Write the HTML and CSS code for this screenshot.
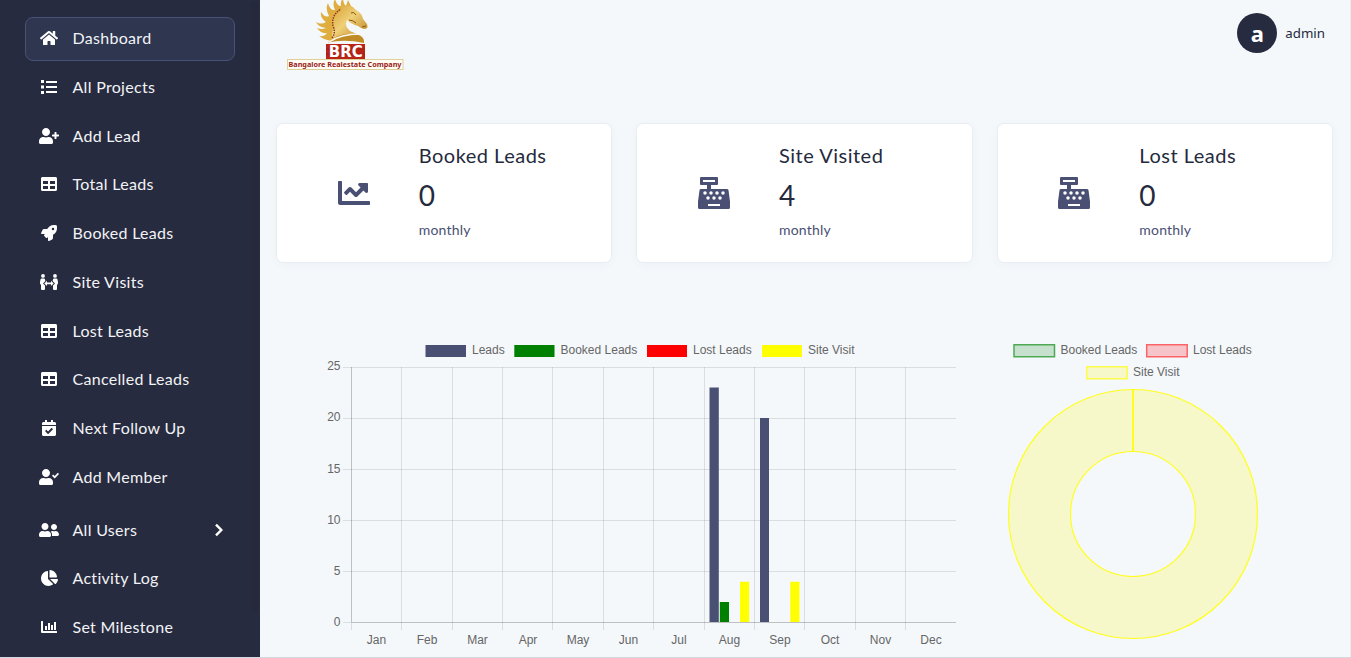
FILE: index.html
```html
<!DOCTYPE html>
<html lang="en">
<head>
<meta charset="utf-8">
<title>Dashboard</title>
<link rel="stylesheet" href="styles.css">
</head>
<body>
<svg class="defs" width="0" height="0">
  <symbol id="table" viewBox="0 0 512 512"><path d="M464 32H48C21.49 32 0 53.49 0 80v352c0 26.51 21.49 48 48 48h416c26.51 0 48-21.49 48-48V80c0-26.51-21.49-48-48-48zM224 416H64v-96h160v96zm0-160H64v-96h160v96zm224 160H288v-96h160v96zm0-160H288v-96h160v96z"/></symbol>
  <symbol id="register" viewBox="0 0 512 512"><path fill-rule="evenodd" d="M48 0h256q16 0 16 16v96q0 16-16 16h-96v64h256q20 0 24 20l24 180v96q0 24-24 24H24q-24 0-24-24v-96l24-180q4-20 24-20h96v-64H48q-16 0-16-16V16Q32 0 48 0zM80 48v32h192V48zM160 432v32h192v-32zM84 256a28 28 0 1 0 56 0a28 28 0 1 0-56 0zM180 256a28 28 0 1 0 56 0a28 28 0 1 0-56 0zM276 256a28 28 0 1 0 56 0a28 28 0 1 0-56 0zM372 256a28 28 0 1 0 56 0a28 28 0 1 0-56 0zM132 336a28 28 0 1 0 56 0a28 28 0 1 0-56 0zM228 336a28 28 0 1 0 56 0a28 28 0 1 0-56 0zM324 336a28 28 0 1 0 56 0a28 28 0 1 0-56 0z"/></symbol>
  <symbol id="person" viewBox="0 0 448 512"><path d="M224 256c70.7 0 128-57.3 128-128S294.7 0 224 0 96 57.3 96 128s57.3 128 128 128zm89.6 32h-16.7c-22.2 10.2-46.9 16-72.9 16s-50.6-5.8-72.9-16h-16.7C60.2 288 0 348.2 0 422.4V464c0 26.5 21.5 48 48 48h352c26.5 0 48-21.5 48-48v-41.6c0-74.2-60.2-134.4-134.4-134.4z"/></symbol>
</svg>
<div class="app">
  <nav class="sidebar">
    <a class="item active"><span class="ico"><svg width="18" height="16" viewBox="0 0 576 512"><path d="M280.37 148.26L96 300.11V464a16 16 0 0 0 16 16l112.06-.29a16 16 0 0 0 15.92-16V368a16 16 0 0 1 16-16h64a16 16 0 0 1 16 16v95.64a16 16 0 0 0 16 16.05L464 480a16 16 0 0 0 16-16V300L295.67 148.26a12.19 12.19 0 0 0-15.3 0zM571.6 251.47L488 182.56V44.05a12 12 0 0 0-12-12h-56a12 12 0 0 0-12 12v72.61L318.47 43a48 48 0 0 0-61 0L4.34 251.47a12 12 0 0 0-1.6 16.9l25.5 31A12 12 0 0 0 45.15 301l235.22-193.74a12.19 12.19 0 0 1 15.3 0L530.9 301a12 12 0 0 0 16.9-1.6l25.5-31a12 12 0 0 0-1.7-16.93z"/></svg></span><span class="label">Dashboard</span></a>
    <a class="item"><span class="ico"><svg width="16" height="16" viewBox="0 0 16 16"><path d="M0 1h3v3H0zM0 6.500h3v3H0zM0 12h3v3H0zM5 2h11v2H5zM5 7h11v2H5zM5 12h11v2H5z"/></svg></span><span class="label">All Projects</span></a>
    <a class="item"><span class="ico"><svg width="20" height="16" viewBox="0 0 640 512"><use href="#person" width="448" height="512"/><path d="M624 208h-64v-64c0-8.800-7.200-16-16-16h-32c-8.800 0-16 7.200-16 16v64h-64c-8.800 0-16 7.200-16 16v32c0 8.800 7.200 16 16 16h64v64c0 8.800 7.200 16 16 16h32c8.800 0 16-7.200 16-16v-64h64c8.800 0 16-7.200 16-16v-32c0-8.800-7.200-16-16-16z"/></svg></span><span class="label">Add Lead</span></a>
    <a class="item"><span class="ico"><svg width="16" height="16"><use href="#table"/></svg></span><span class="label">Total Leads</span></a>
    <a class="item"><span class="ico"><svg width="16" height="16" viewBox="0 0 512 512"><path d="M505.120 19.094c-1.189-5.531-6.658-11-12.207-12.188C460.716 0 435.507 0 410.407 0 307.175 0 245.269 55.203 199.052 128H94.838c-16.348.016-35.557 11.875-42.887 26.484L2.516 253.297A28.400 28.400 0 0 0 0 264a24 24 0 0 0 24.006 24h103.810l-22.475 22.469c-11.365 11.361-12.996 32.258 0 45.250l50.905 50.906c11.156 11.188 32.156 13.156 45.277 0l22.475-22.469V488a24 24 0 0 0 24.006 24 28.560 28.560 0 0 0 10.707-2.516l98.728-49.390c14.629-7.297 26.508-26.500 26.508-42.860V312.797c72.598-46.313 128.035-108.406 128.035-211.094C512.075 76.500 512.075 51.297 505.120 19.094zM384.040 168A40 40 0 1 1 424.050 128 40 40 0 0 1 384.040 168z"/></svg></span><span class="label">Booked Leads</span></a>
    <a class="item"><span class="ico"><svg width="18" height="16" viewBox="0 0 18 16"><circle cx="3" cy="1.900" r="1.900"/><circle cx="15" cy="1.900" r="1.900"/><path d="M1.700 4.500h2.100q1 0 1.200 1l.4 1.500L3 9.400l2 2V15q0 1-1 1H2q-1 0-1-1v-4L0 9.600V8l.5-2.500q.2-1 1.200-1zM16.300 4.500h-2.100q-1 0-1.200 1L12.600 7 15 9.400l-2 2V15q0 1 1 1h2q1 0 1-1v-4l1-1.400V8l-.5-2.500q-.2-1-1.200-1z"/><path d="M7 6.800v1.800h4V6.800l2.700 2.600L11 12v-1.800H7V12L4.300 9.400z"/></svg></span><span class="label">Site Visits</span></a>
    <a class="item"><span class="ico"><svg width="16" height="16"><use href="#table"/></svg></span><span class="label">Lost Leads</span></a>
    <a class="item"><span class="ico"><svg width="16" height="16"><use href="#table"/></svg></span><span class="label">Cancelled Leads</span></a>
    <a class="item"><span class="ico"><svg width="14" height="16" viewBox="0 0 448 512"><path d="M436 160H12c-6.627 0-12-5.373-12-12v-36c0-26.510 21.490-48 48-48h48V12c0-6.627 5.373-12 12-12h40c6.627 0 12 5.373 12 12v52h128V12c0-6.627 5.373-12 12-12h40c6.627 0 12 5.373 12 12v52h48c26.510 0 48 21.490 48 48v36c0 6.627-5.373 12-12 12zM12 192h424c6.627 0 12 5.373 12 12v260c0 26.510-21.490 48-48 48H48c-26.510 0-48-21.490-48-48V204c0-6.627 5.373-12 12-12zm333.296 95.947l-28.169-28.398c-4.667-4.705-12.265-4.736-16.970-.068L194.120 364.665l-45.980-46.352c-4.667-4.705-12.266-4.736-16.971-.068l-28.397 28.170c-4.705 4.667-4.736 12.265-.068 16.970l82.601 83.269c4.667 4.705 12.265 4.736 16.970.068l142.953-141.805c4.705-4.667 4.736-12.265.068-16.970z"/></svg></span><span class="label">Next Follow Up</span></a>
    <a class="item"><span class="ico"><svg width="20" height="16" viewBox="0 0 640 512"><use href="#person" width="448" height="512"/><path d="M415 213l37-40 50 50 100-100 38 40-137 138z"/></svg></span><span class="label">Add Member</span></a>
    <a class="item group"><span class="ico"><svg width="20" height="16" viewBox="0 0 640 512"><path d="M192 256c61.900 0 112-50.100 112-112S253.900 32 192 32 80 82.100 80 144s50.100 112 112 112zm76.800 32h-8.300c-20.800 10-43.900 16-68.500 16s-47.600-6-68.500-16h-8.300C51.600 288 0 339.600 0 403.200V432c0 26.500 21.500 48 48 48h288c26.500 0 48-21.500 48-48v-28.800c0-63.600-51.600-115.200-115.200-115.200zM480 256c53 0 96-43 96-96s-43-96-96-96-96 43-96 96 43 96 96 96zm48 32h-3.800c-13.900 4.800-28.600 8-44.200 8s-30.300-3.200-44.200-8H432c-20.400 0-39.200 5.900-55.700 15.400 24.400 26.300 39.700 61.200 39.700 99.800v38.400c0 2.200-.5 4.300-.6 6.400H592c26.500 0 48-21.500 48-48 0-61.900-50.100-112-112-112z"/></svg></span><span class="label">All Users</span><svg class="chev" width="10" height="14" viewBox="0 0 10 14"><path d="M2 1.700 7.300 7 2 12.300"/></svg></a>
    <a class="item"><span class="ico"><svg width="17" height="16" viewBox="0 0 544 512"><path d="M527.790 288H290.500l158.030 158.030c6.040 6.040 15.980 6.530 22.190.68 38.700-36.460 65.320-85.610 73.130-140.860 1.340-9.460-6.510-17.850-16.060-17.850zm-15.830-64.800C503.720 103.740 408.260 8.280 288.800.04 279.680-.59 272 7.100 272 16.240V240h223.770c9.140 0 16.820-7.680 16.190-16.800zM224 288V50.710c0-9.550-8.390-17.400-17.840-16.060C86.990 51.490-4.100 155.600.14 280.370 4.500 408.510 114.830 513.590 243.030 511.980c50.400-.63 96.970-16.870 135.260-44.030 7.900-5.600 8.420-17.230 1.570-24.080L224 288z"/></svg></span><span class="label">Activity Log</span></a>
    <a class="item"><span class="ico"><svg width="16" height="16" viewBox="0 0 16 16"><path d="M0 2.500Q0 2 .5 2h1q.5 0 .5.500V12h13.500q.5 0 .5.500v1q0 .5-.5.500H1q-1 0-1-1zM4 7h2v4H4zM7 4h2v7H7zM10 6h2v5h-2zM13 3h2v8h-2z"/></svg></span><span class="label">Set Milestone</span></a>
    <i class="scroll"></i>
  </nav>
  <main class="main">
    <header class="top">
      <svg class="logo" width="118" height="71" viewBox="0 0 118 71">
        <defs><linearGradient id="gold" x1="0" y1="0" x2="1" y2="1"><stop offset="0" stop-color="#d79a2a"/><stop offset=".45" stop-color="#efd078"/><stop offset="1" stop-color="#b47714"/></linearGradient></defs>
        <path fill="#dfae3f" d="M45 41Q37 40 32 36Q37 37 40 33Q34 34 30 28Q35 30 39 28Q31 27 29 22Q34 25 39 22Q33 18 34 12Q38 18 42 16Q38 9 41 3Q43 11 48 10Q45 4 48-1Q50 6 54 6Q53 2 56-2Q56 4 59 6L61 0 65 8 52 16 46 28z"/>
        <path fill="url(#gold)" d="M42 42Q48 36 46 29Q42 17 50 10Q58 3 66 7L69 10Q75 13 76 19L80 24Q82 29 77 29L74 28 71 26Q64 24 60 20Q57 26 63 31Q70 34 74 36Q55 32 42 42z"/>
        <path fill="none" stroke="#8d3b16" stroke-width="1.500" stroke-dasharray="1.500 1" d="M45 38Q49 33 46 26Q44 15 54 9"/>
        <path fill="none" stroke="#8a5615" d="M64 13q3-2 5 2M62 20q4 0 7 3M75 27l4-1"/>
        <path fill="#c08b24" d="M41 42.500Q50 33 66 34Q78 35 77 43Q58 39 41 42.500z"/>
        <path fill="none" stroke="#fffaf0" stroke-width="1.500" d="M42 42Q54 34 73 34"/>
        <rect x="39" y="44" width="39" height="15" fill="#b82418"/>
        <path stroke="#8f1c14" stroke-width=".6" d="M39 49h39M39 54h39"/>
        <text class="brc" x="58.800" y="56.700" text-anchor="middle" textLength="34" lengthAdjust="spacingAndGlyphs">BRC</text>
        <rect x="0.500" y="59.500" width="115.500" height="10" fill="#fffdf4" stroke="#dfcf98"/>
        <text class="company" x="1.500" y="66.500" textLength="113" lengthAdjust="spacingAndGlyphs">Bangalore Realestate Company</text>
      </svg>
      <div class="user"><span class="avatar">a</span><span class="name">admin</span></div>
    </header>
    <section class="cards">
      <article class="card"><svg class="big" width="32" height="32" viewBox="0 0 512 512"><path d="M496 384H64V80c0-8.840-7.160-16-16-16H16C7.160 64 0 71.160 0 80v336c0 17.670 14.330 32 32 32h464c8.840 0 16-7.160 16-16v-32c0-8.840-7.160-16-16-16zM464 96H345.940c-21.380 0-32.090 25.850-16.970 40.970l32.400 32.400L288 242.750l-73.370-73.370c-12.500-12.500-32.760-12.500-45.250 0l-68.690 68.690c-6.250 6.250-6.250 16.380 0 22.630l22.620 22.620c6.250 6.250 16.380 6.250 22.630 0L192 237.250l73.370 73.370c12.500 12.500 32.760 12.500 45.250 0l96-96 32.400 32.400c15.120 15.120 40.970 4.410 40.970-16.970V112c.01-8.840-7.150-16-15.990-16z"/></svg><div><h2>Booked Leads</h2><strong>0</strong><p>monthly</p></div></article>
      <article class="card"><svg class="big" width="32" height="32"><use href="#register"/></svg><div><h2>Site Visited</h2><strong>4</strong><p>monthly</p></div></article>
      <article class="card"><svg class="big" width="32" height="32"><use href="#register"/></svg><div><h2>Lost Leads</h2><strong>0</strong><p>monthly</p></div></article>
    </section>
    <section class="charts">
      <svg width="680" height="320" viewBox="300 338 680 320">
        <path fill="#4a5073" d="M425.500 345h40.500v12h-40.500z"/><path fill="green" d="M514.300 345h40.200v12h-40.200z"/><path fill="red" d="M647 345h40v12h-40z"/><path fill="#ff0" d="M762 345h40v12h-40z"/>
        <g class="tick"><text x="472" y="354">Leads</text><text x="560.500" y="354">Booked Leads</text><text x="693" y="354">Lost Leads</text><text x="808" y="354">Site Visit</text></g>
        <path class="grid" d="M343 367.500H956M343 418.500H956M343 469.500H956M343 520.500H956M343 571.500H956M401.500 367V630M452.500 367V630M502.500 367V630M552.500 367V630M603.500 367V630M653.500 367V630M704.500 367V630M754.500 367V630M804.500 367V630M855.500 367V630M905.500 367V630M343 622.500H351M351.500 623V630"/>
        <path class="zero" d="M351.500 367V622M351 622.500H956"/>
        <path fill="#4a5073" d="M709.500 387.500h9.300V622h-9.300zM760 418h9v204h-9z"/><path fill="green" d="M719.800 602h9.200v20h-9.200z"/><path fill="#ff0" d="M740 581.800h9.200V622H740zM790.300 581.800h9.200V622h-9.200z"/>
        <g class="tick end"><text x="340.500" y="370">25</text><text x="340.500" y="421">20</text><text x="340.500" y="473">15</text><text x="340.500" y="524">10</text><text x="340.500" y="575">5</text><text x="340.500" y="626">0</text></g>
        <g class="tick mid"><text x="376.500" y="644">Jan</text><text x="427" y="644">Feb</text><text x="477.500" y="644">Mar</text><text x="528" y="644">Apr</text><text x="578" y="644">May</text><text x="628.500" y="644">Jun</text><text x="679" y="644">Jul</text><text x="729.500" y="644">Aug</text><text x="780" y="644">Sep</text><text x="830" y="644">Oct</text><text x="880.500" y="644">Nov</text><text x="931" y="644">Dec</text></g>
      </svg>
      <svg width="300" height="320" viewBox="980 338 300 320">
        <path fill="#c5e1cd" stroke="#4fa953" stroke-width="1.500" d="M1014 344.800h40.500v12H1014z"/><path fill="#f7c5c9" stroke="#fb6467" stroke-width="1.500" d="M1146.700 344.800h40.500v12h-40.500z"/><path fill="#f7f8ca" stroke="#fcfc4c" stroke-width="1.500" d="M1086.700 366.800h40.500v12h-40.500z"/>
        <g class="tick"><text x="1060.500" y="354">Booked Leads</text><text x="1193" y="354">Lost Leads</text><text x="1133" y="376">Site Visit</text></g>
        <circle cx="1133" cy="514" r="93.500" fill="none" stroke="#f7f8ca" stroke-width="62"/>
        <g fill="none" stroke="#ffff1c" stroke-width="1.200"><circle cx="1133" cy="514" r="124.500"/><circle cx="1133" cy="514" r="62.500"/><path stroke-width="2" d="M1133 389.500v62"/></g>
      </svg>
    </section>
  </main>
</div>
</body>
</html>
```
FILE: styles.css
```css
* { box-sizing: border-box; }
body { margin: 0; background: #f4f8fb; font-family: Lato, sans-serif; color: #252a3d; }
.defs { position: absolute; }
.app { display: flex; height: 658px; overflow: hidden; border-bottom: 1px solid #d3d9de; }
.sidebar { position: relative; flex: none; width: 260px; padding: 17px 25px 0; background: #272b3f; display: flex; flex-direction: column; gap: 4.75px; }
.item { flex: none; height: 44px; display: flex; align-items: center; border: 1px solid transparent; border-radius: 8px; padding: 0 10px 2px 13px; color: #f2f3f6; font-size: 16px; letter-spacing: .3px; }
.active { background: #2f3650; border-color: #4a5178; }
.ico { width: 20px; margin-right: 13.5px; display: flex; justify-content: center; }
.ico svg { fill: #fff; display: block; }
.label { flex: 1; white-space: nowrap; padding-bottom: 1px; }
.group { margin-top: 4px; }
.chev { fill: none; stroke: #fff; stroke-width: 2.4; margin-top: 1px; }
.scroll { position: absolute; right: 2px; top: 2px; width: 7px; height: 610px; border-radius: 4px; background: #25293b; }
.main { flex: 1; border-right: 1px solid #e7ebee; padding: 0 17px 0 16px; }
.top { height: 123px; display: flex; justify-content: space-between; align-items: flex-start; padding: 0 8px 0 11px; }
.logo { display: block; }
.brc { font: bold 15px "DejaVu Sans", sans-serif; fill: #fff; }
.company { font: bold 7.500px "Noto Sans", sans-serif; fill: #991b18; }
.user { display: flex; align-items: center; gap: 8px; margin-top: 13px; font-family: "Noto Sans", sans-serif; }
.avatar { width: 40px; height: 40px; border-radius: 50%; background: #272b3f; color: #fff; font-size: 22px; font-weight: bold; line-height: 40px; text-align: center; }
.name { font-size: 13.3px; }
.cards { display: grid; grid-template-columns: repeat(3, 1fr); gap: 24px; }
.card { height: 140px; background: #fff; border: 1px solid #e8edf1; border-radius: 7px; box-shadow: 0 2px 10px rgba(60,80,110,.035); display: flex; padding: 18px 0 0 60.7px; }
.big { flex: none; fill: #4a5073; margin: 35px 49px 0 0; }
.card h2 { margin: 0; font-weight: 400; font-size: 20px; line-height: 26px; letter-spacing: .5px; }
.card strong { display: block; margin-top: 10px; font-weight: 400; font-size: 28px; line-height: 34px; }
.card p { margin: 8px 0 0; font-size: 14px; line-height: 20px; letter-spacing: .2px; color: #4a5073; }
.charts { display: flex; padding: 75px 0 0 24px; }
.charts svg { flex: none; display: block; }
.tick { font: 12px "Liberation Sans", Arial, sans-serif; fill: #666; }
.end { text-anchor: end; }
.mid { text-anchor: middle; }
.grid { stroke: rgba(0,0,0,.1); fill: none; }
.zero { stroke: rgba(0,0,0,.22); fill: none; }
```
